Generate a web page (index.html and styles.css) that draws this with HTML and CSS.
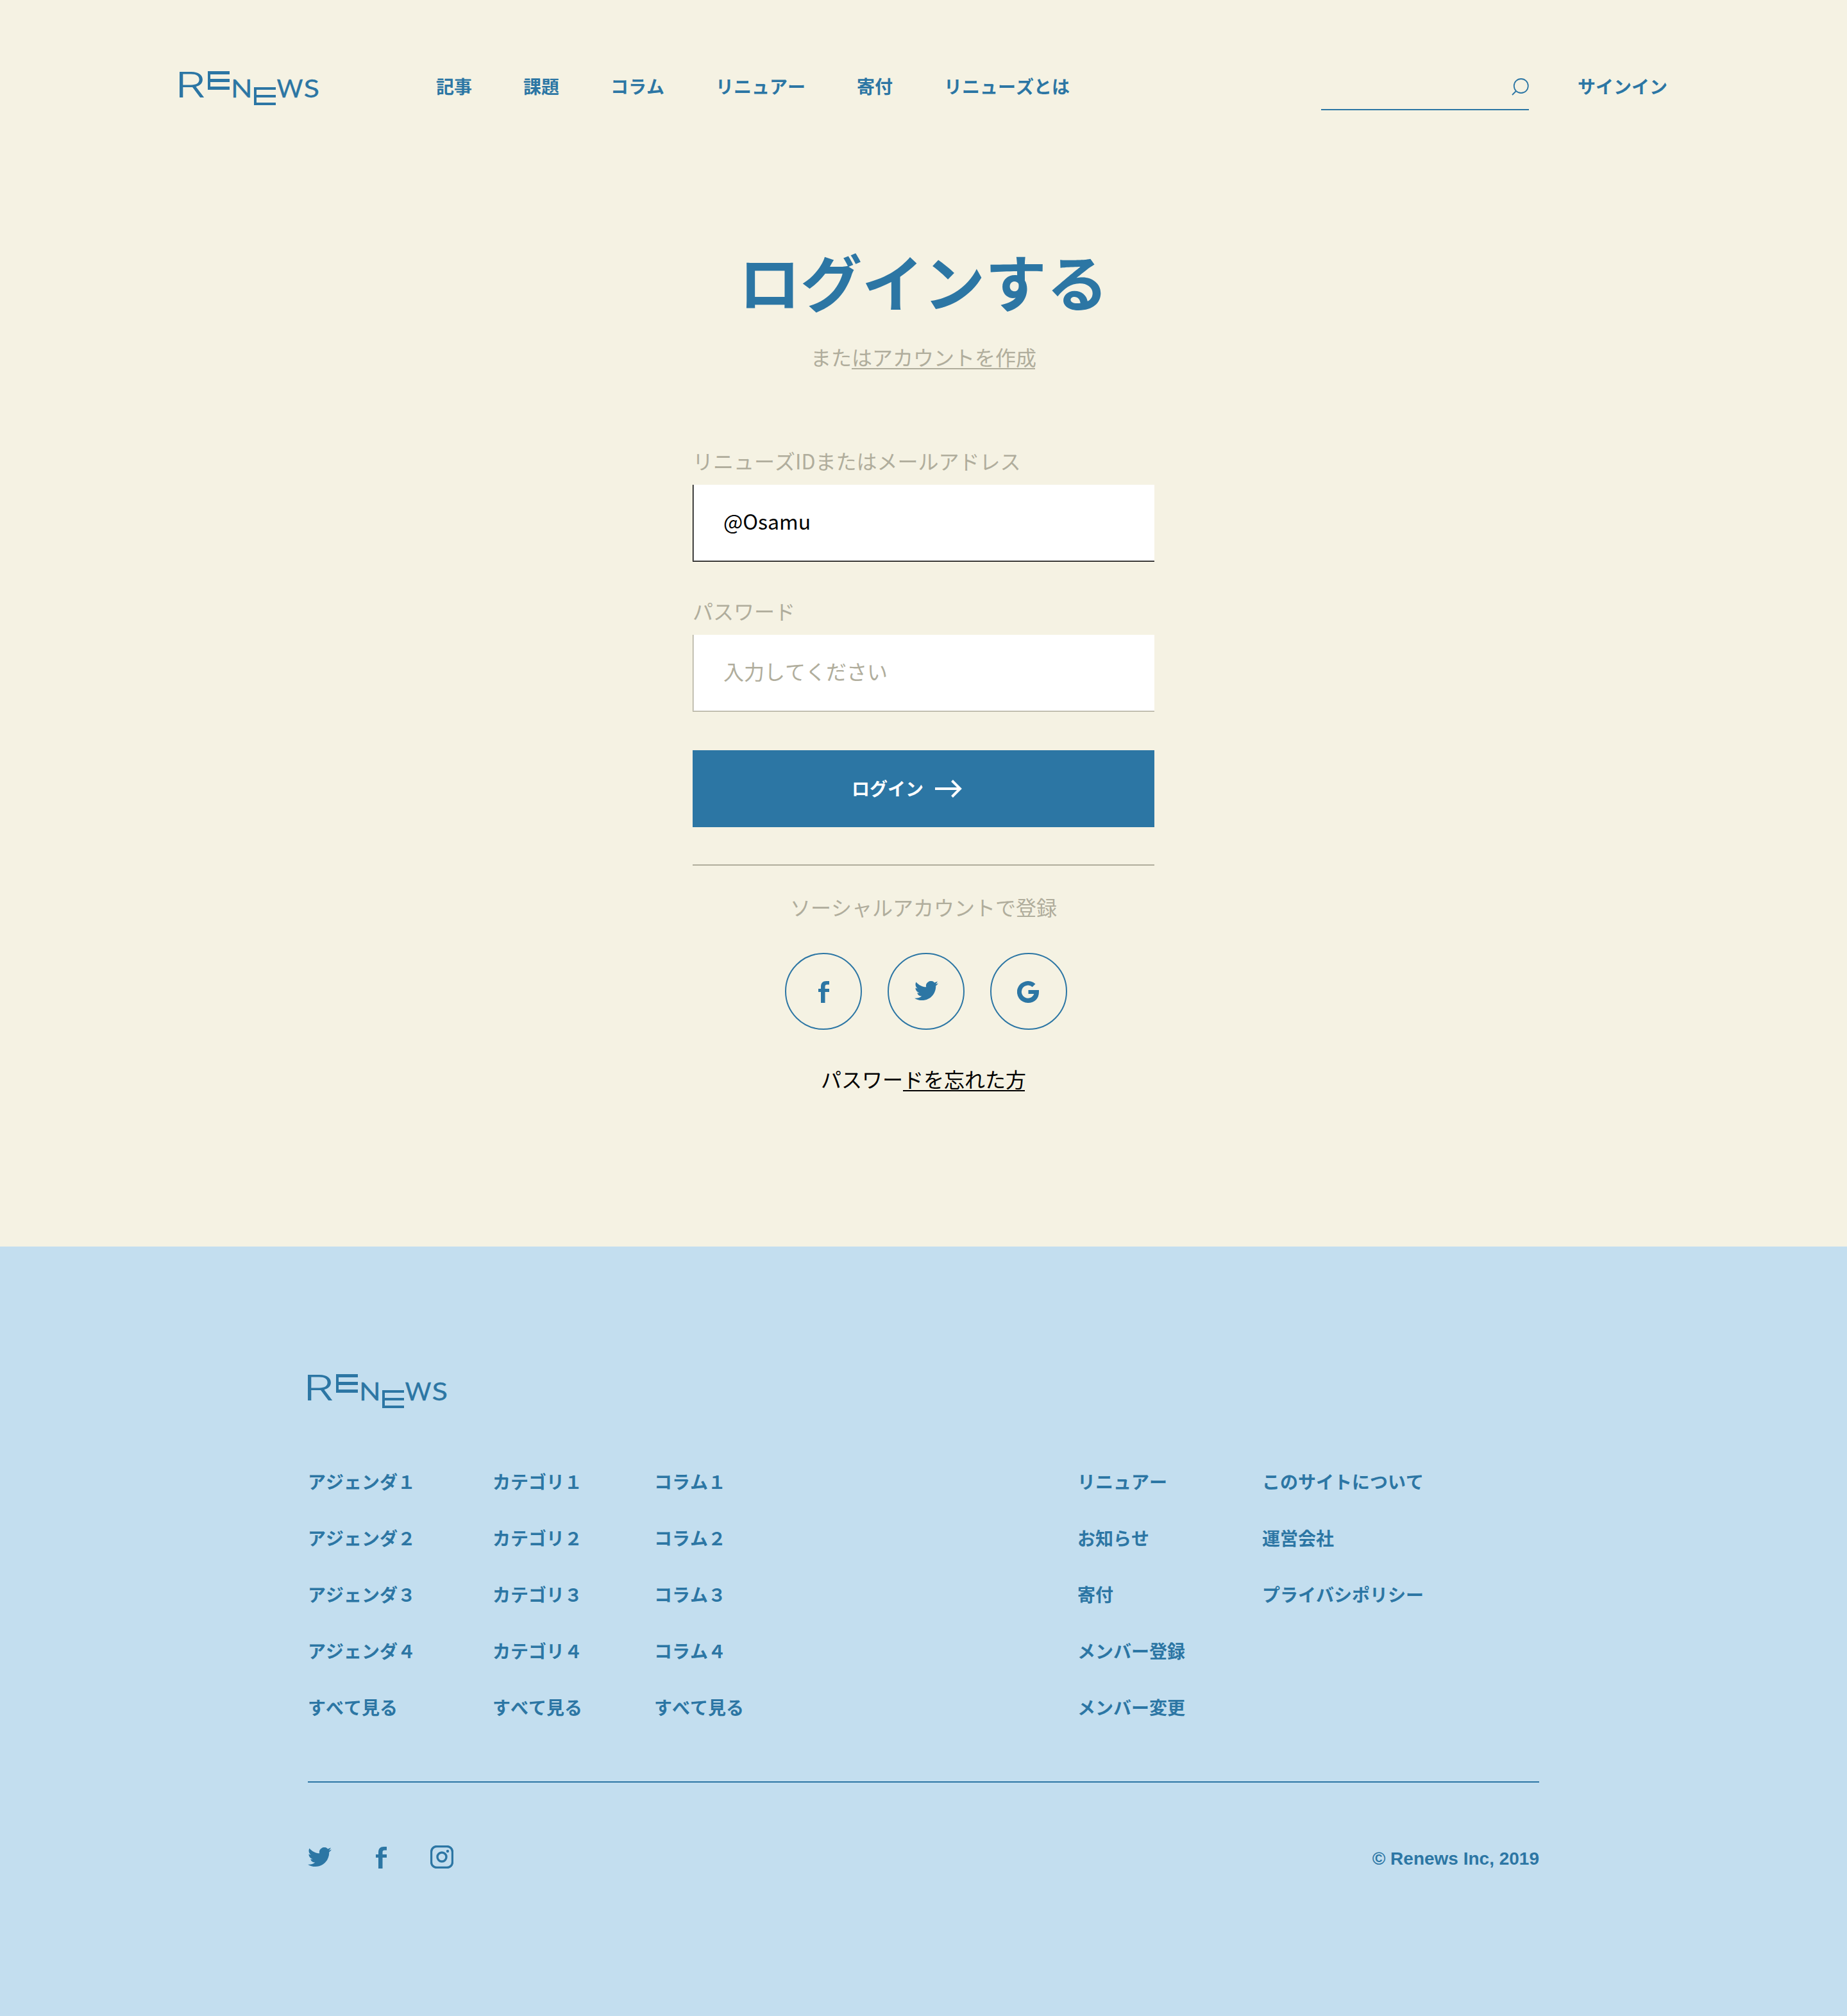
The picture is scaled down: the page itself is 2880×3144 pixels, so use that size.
FILE: index.html
```html
<!DOCTYPE html>
<html lang="ja">
<head>
<meta charset="utf-8">
<title>ログイン | Renews</title>
<link rel="stylesheet" href="styles.css">
</head>
<body>
<header class="header">
  <svg class="logo" viewBox="0 0 217 53" role="img" aria-label="Renews">
    <text class="logo-r" transform="translate(-7.3 41) scale(1.38 1)">R</text>
    <path d="M44 0h34v5H48v7h30v5H48v7h30v5H44z"/>
    <text class="logo-s" transform="translate(79.9 41) scale(1.13 1)">N</text>
    <path d="M116 25h34v4H120v8h30v4H120v8h30v4H116z"/>
    <text class="logo-s" transform="translate(151.4 41) scale(1.015 1)">W</text>
    <text class="logo-s" transform="translate(193.5 41) scale(1.16 1)">S</text>
  </svg>
  <nav class="nav">
    <a>記事</a><a>課題</a><a>コラム</a><a>リニュアー</a><a>寄付</a><a>リニューズとは</a>
  </nav>
  <div class="search">
    <svg width="27" height="27" viewBox="0 0 27 27"><circle class="thin" cx="14.8" cy="12" r="11"/><path class="thin" d="M7 20L1 26"/></svg>
  </div>
  <a class="signin">サインイン</a>
</header>

<main class="main">
  <h1 class="title">ログインする</h1>
  <p class="sub">また<a class="underlined">はアカウントを作成</a></p>
  <form class="form">
    <label class="label">リニューズIDまたはメールアドレス</label>
    <div class="field filled">@Osamu</div>
    <label class="label">パスワード</label>
    <div class="field">入力してください</div>
    <div class="button">ログイン<svg width="42" height="28" viewBox="0 0 42 28"><path d="M0 14h38M26.500 1.500L39 14 26.500 26.500"/></svg></div>
  </form>
  <p class="social-title">ソーシャルアカウントで登録</p>
  <div class="social">
    <a class="circle"><svg class="i-facebook" viewBox="0 0 17 34"><path d="M4 34V17H0v-5h4V9c0-6 3-9 8.500-9H17v5.500h-3.500C11 5.500 10.500 7 10.500 9v3H17v5h-6.500v17z"/></svg></a>
    <a class="circle"><svg class="i-twitter" viewBox="0 2.300 24 20"><path d="M23.954 4.569a10 10 0 0 1-2.825.775 4.958 4.958 0 0 0 2.163-2.723c-.951.555-2.005.959-3.127 1.184a4.920 4.920 0 0 0-8.384 4.482C7.691 8.094 4.066 6.130 1.640 3.161a4.822 4.822 0 0 0-.666 2.475c0 1.710.870 3.213 2.188 4.096a4.904 4.904 0 0 1-2.228-.616v.061a4.923 4.923 0 0 0 3.946 4.827 4.996 4.996 0 0 1-2.212.085 4.937 4.937 0 0 0 4.604 3.417 9.868 9.868 0 0 1-6.102 2.105c-.390 0-.779-.023-1.170-.067a13.995 13.995 0 0 0 7.557 2.209c9.054 0 13.999-7.496 13.999-13.986 0-.209 0-.420-.015-.630a9.936 9.936 0 0 0 2.460-2.548z"/></svg></a>
    <a class="circle"><svg class="i-google" viewBox="0 0 34 34"><path d="M17.500 14H34v3c0 10-6.500 17-17 17A17 17 0 1 1 28.500 4.600l-4.800 4.700A10 10 0 1 0 26.300 20H17.500z"/></svg></a>
  </div>
  <p class="forgot">パスワー<a class="underlined">ドを忘れた方</a></p>
</main>

<footer class="footer">
  <svg class="logo" viewBox="0 0 217 53" role="img" aria-label="Renews">
    <text class="logo-r" transform="translate(-7.3 41) scale(1.38 1)">R</text>
    <path d="M44 0h34v5H48v7h30v5H48v7h30v5H44z"/>
    <text class="logo-s" transform="translate(79.9 41) scale(1.13 1)">N</text>
    <path d="M116 25h34v4H120v8h30v4H120v8h30v4H116z"/>
    <text class="logo-s" transform="translate(151.4 41) scale(1.015 1)">W</text>
    <text class="logo-s" transform="translate(193.5 41) scale(1.16 1)">S</text>
  </svg>
  <div class="columns">
    <div class="col"><a>アジェンダ１</a><a>アジェンダ２</a><a>アジェンダ３</a><a>アジェンダ４</a><a>すべて見る</a></div>
    <div class="col"><a>カテゴリ１</a><a>カテゴリ２</a><a>カテゴリ３</a><a>カテゴリ４</a><a>すべて見る</a></div>
    <div class="col"><a>コラム１</a><a>コラム２</a><a>コラム３</a><a>コラム４</a><a>すべて見る</a></div>
    <div class="col"><a>リニュアー</a><a>お知らせ</a><a>寄付</a><a>メンバー登録</a><a>メンバー変更</a></div>
    <div class="col"><a>このサイトについて</a><a>運営会社</a><a>プライバシポリシー</a></div>
  </div>
  <div class="bottom">
    <svg class="i-twitter" viewBox="0 2.300 24 20"><path d="M23.954 4.569a10 10 0 0 1-2.825.775 4.958 4.958 0 0 0 2.163-2.723c-.951.555-2.005.959-3.127 1.184a4.920 4.920 0 0 0-8.384 4.482C7.691 8.094 4.066 6.130 1.640 3.161a4.822 4.822 0 0 0-.666 2.475c0 1.710.870 3.213 2.188 4.096a4.904 4.904 0 0 1-2.228-.616v.061a4.923 4.923 0 0 0 3.946 4.827 4.996 4.996 0 0 1-2.212.085 4.937 4.937 0 0 0 4.604 3.417 9.868 9.868 0 0 1-6.102 2.105c-.390 0-.779-.023-1.170-.067a13.995 13.995 0 0 0 7.557 2.209c9.054 0 13.999-7.496 13.999-13.986 0-.209 0-.420-.015-.630a9.936 9.936 0 0 0 2.460-2.548z"/></svg>
    <svg class="i-facebook" viewBox="0 0 17 34"><path d="M4 34V17H0v-5h4V9c0-6 3-9 8.500-9H17v5.500h-3.500C11 5.500 10.500 7 10.500 9v3H17v5h-6.500v17z"/></svg>
    <svg class="i-instagram" viewBox="0 0 36 36"><rect class="line" x="1.500" y="1.500" width="33" height="33" rx="8.500"/><circle class="line" cx="18" cy="18" r="7"/><circle cx="27" cy="9" r="2.200"/></svg>
    <span class="copyright">© Renews Inc, 2019</span>
  </div>
</footer>
</body>
</html>
```
FILE: styles.css
```css
:root {
  --blue: #2c76a4;
  --cream: #f5f2e3;
  --sky: #c3deef;
  --gray: #b0ad9c;
}

* {
  box-sizing: border-box;
}

body {
  margin: 0;
  background: var(--cream);
  color: var(--blue);
  font-family: "Noto Sans CJK JP", sans-serif;
  font-size: 28px;
  line-height: 40px;
  font-weight: 700;
  font-kerning: none;
}

p,
h1 {
  margin: 0;
}

svg {
  display: block;
  flex: none;
  fill: currentColor;
}

.thin,
.line {
  fill: none;
  stroke: currentColor;
  stroke-width: 1.8;
}

.line {
  stroke-width: 3.4;
}

.logo {
  width: 217px;
  height: 53px;
  overflow: visible;
}

.logo-r {
  font-family: Inter, sans-serif;
  font-size: 55px;
  font-weight: 300;
}

.logo-s {
  font-family: Lato, sans-serif;
  font-size: 39px;
  font-weight: 400;
  stroke: currentColor;
  stroke-width: 0.3;
}

/* header */
.header {
  height: 280px;
  padding: 111px 280px 0;
  display: flex;
  align-items: flex-start;
}

.nav {
  display: flex;
  gap: 80px;
  margin: 3px 0 0 183px;
}

.search {
  width: 324px;
  height: 61px;
  margin: 0 76px 0 auto;
  padding-top: 11px;
  border-bottom: 2px solid var(--blue);
  display: flex;
  justify-content: flex-end;
}

.signin {
  margin-top: 3px;
}

/* login */
.main {
  height: 1664px;
  display: flex;
  flex-direction: column;
  align-items: center;
  font-size: 32px;
  font-weight: 400;
  line-height: 48px;
}

.title {
  margin-top: 87px;
  font-size: 96px;
  line-height: 140px;
}

.sub {
  margin-top: 25px;
  color: var(--gray);
}

.underlined {
  display: inline-block;
  height: 44px;
  background: linear-gradient(currentColor, currentColor) 0 100% / calc(100% - 2px) 2px no-repeat;
}

.form {
  width: 720px;
  margin-top: 114px;
  border-bottom: 2px solid var(--gray);
  padding-bottom: 58px;
}

.label {
  display: block;
  color: var(--gray);
  margin-bottom: 14px;
}

.field {
  height: 120px;
  margin-bottom: 52px;
  padding: 32px 47px 0;
  background: #fff;
  color: var(--gray);
  border: solid var(--gray);
  border-width: 0 0 1px 1px;
  box-shadow: inset 1px -1px 0 #d8d6ce;
}

.field.filled {
  color: #000;
  border-color: #000;
  box-shadow: inset 1px -1px 0 #808080;
}

.button {
  height: 120px;
  margin-top: 60px;
  padding: 0 0 2px 248px;
  display: flex;
  align-items: center;
  gap: 18px;
  background: var(--blue);
  color: #fff;
  font-size: 28px;
  font-weight: 700;
}

.button svg {
  margin-top: 2px;
  fill: none;
  stroke: #fff;
  stroke-width: 4;
}

.social-title {
  margin-top: 40px;
  color: var(--gray);
}

.social {
  display: flex;
  gap: 40px;
  margin: 48px 0 0 8px;
}

.circle {
  width: 120px;
  height: 120px;
  padding-top: 42px;
  border: 2px solid var(--blue);
  border-radius: 50%;
  display: flex;
  justify-content: center;
}

.i-facebook {
  width: 17px;
  height: 34px;
}

.i-twitter {
  width: 37px;
  height: 31px;
}

.i-google {
  width: 34px;
  height: 34px;
  margin-right: 2px;
}

.i-instagram {
  width: 36px;
  height: 36px;
}

.forgot {
  margin-top: 52px;
  color: #000;
}

/* footer */
.footer {
  height: 1200px;
  padding: 199px 480px 0;
  background: var(--sky);
}

.columns {
  display: grid;
  grid-template-columns: 288px 252px 660px 288px auto;
  height: 470px;
  margin-top: 94px;
}

.col {
  display: flex;
  flex-direction: column;
  gap: 48px;
}

.bottom {
  margin-top: 18px;
  border-top: 2px solid var(--blue);
  padding-top: 98px;
  display: flex;
  align-items: flex-start;
}

.bottom .i-twitter {
  margin-top: 3px;
}

.bottom .i-facebook {
  margin: 2px 68px 0 69px;
}

.copyright {
  margin: 1px 0 0 auto;
  font-family: "Liberation Sans", sans-serif;
}
```
